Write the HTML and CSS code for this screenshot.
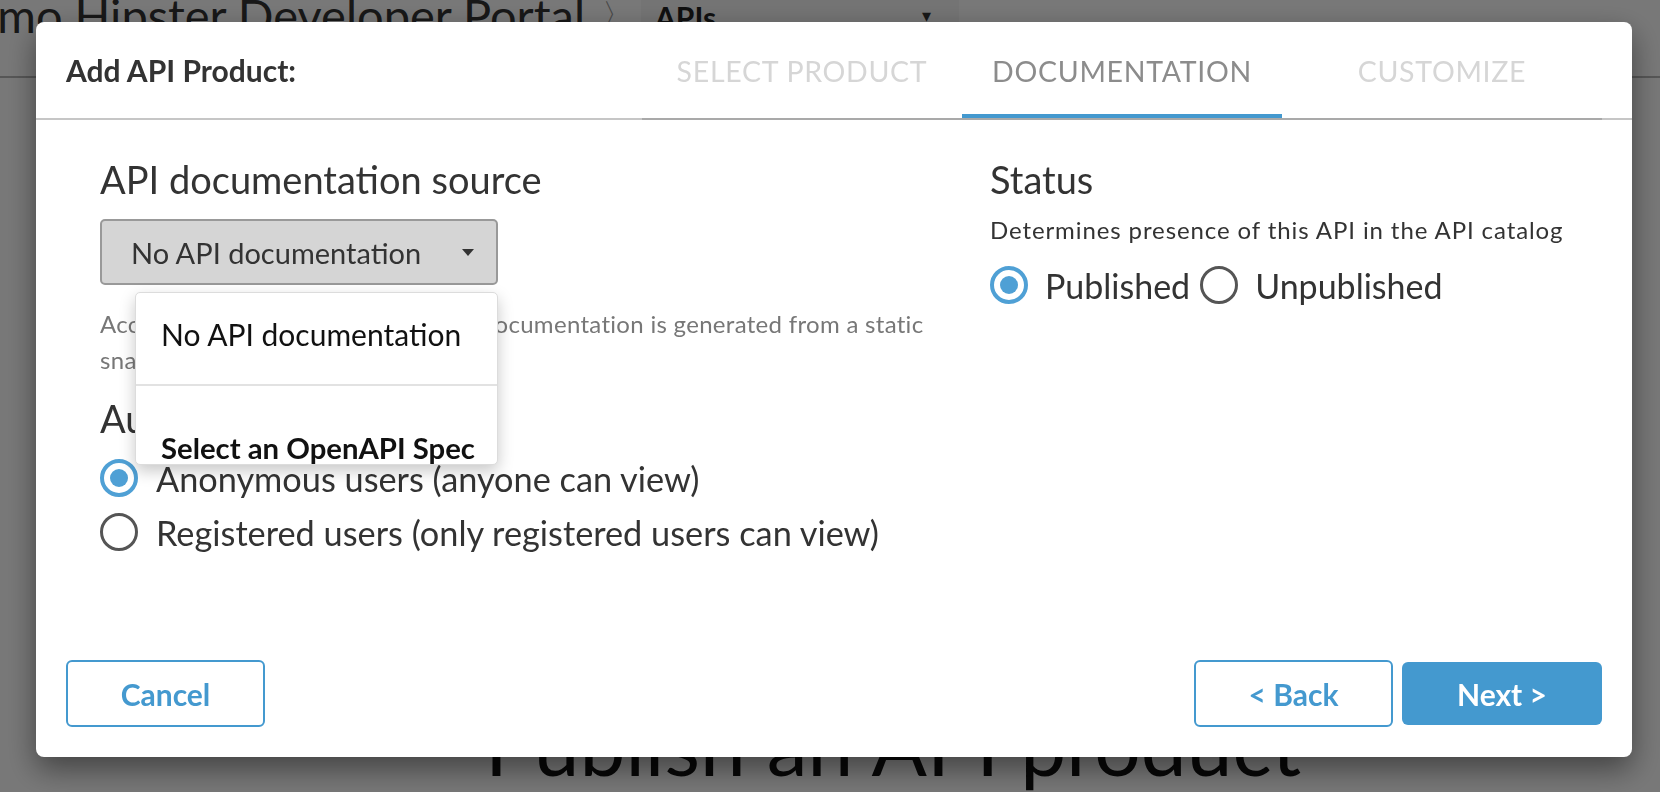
FILE: index.html
```html
<!DOCTYPE html>
<html lang="en">
<head>
<meta charset="utf-8">
<title>Add API Product</title>
<link rel="stylesheet" href="styles.css">
</head>
<body>
<div class="page">
  <header class="site-header">
    <div class="site-title">Demo Hipster Developer Portal</div>
    <div class="crumb-sep">〉</div>
    <div class="crumb-select"><span class="crumb-label">APIs</span><span class="crumb-caret">▾</span></div>
  </header>
  <main class="page-main">
    <h1 class="page-heading">Publish an API product</h1>
  </main>
</div>
<div class="overlay"></div>
<div class="modal">
  <div class="modal-header">
    <div class="modal-title">Add API Product:</div>
    <nav class="steps">
      <div class="step step-done">SELECT PRODUCT</div>
      <div class="step step-active">DOCUMENTATION</div>
      <div class="step step-todo">CUSTOMIZE</div>
    </nav>
  </div>
  <div class="modal-body">
    <section class="col col-left">
      <h2 class="section-title">API documentation source</h2>
      <div class="select-wrap">
        <div class="select-box"><span>No API documentation</span><span class="caret"></span></div>
        <div class="dropdown">
          <div class="dd-item">No API documentation</div>
          <div class="dd-item dd-bold">Select an OpenAPI Spec</div>
        </div>
      </div>
      <p class="helper">Accessible reference docs. The API documentation is generated from a static snapshot of the spec.</p>
      <h2 class="section-title audience">Audience</h2>
      <div class="radio-list">
        <label class="radio-row"><span class="radio radio-on"></span><span>Anonymous users (anyone can view)</span></label>
        <label class="radio-row"><span class="radio"></span><span>Registered users (only registered users can view)</span></label>
      </div>
    </section>
    <section class="col col-right">
      <h2 class="section-title">Status</h2>
      <p class="desc">Determines presence of this API in the API catalog</p>
      <div class="radio-inline">
        <label class="radio-row"><span class="radio radio-on"></span><span>Published</span></label>
        <label class="radio-row"><span class="radio"></span><span>Unpublished</span></label>
      </div>
    </section>
  </div>
  <div class="modal-footer">
    <button class="btn btn-outline">Cancel</button>
    <div class="footer-right">
      <button class="btn btn-outline">&lt; Back</button>
      <button class="btn btn-primary">Next &gt;</button>
    </div>
  </div>
</div>
</body>
</html>
```

FILE: styles.css
```css
* { box-sizing: border-box; }
html, body { margin: 0; padding: 0; }
body {
  width: 1660px;
  height: 792px;
  overflow: hidden;
  font-family: Lato, "Open Sans", "Liberation Sans", sans-serif;
  background: #ffffff;
  color: #333;
}
.page { height: 792px; display: flex; flex-direction: column; }
.site-header {
  height: 78px;
  flex: none;
  border-bottom: 2px solid #b8b8b8;
  display: flex;
  align-items: flex-start;
}
.site-title {
  font-size: 47px;
  line-height: 40px;
  margin-left: -63px;
  margin-top: -5px;
  color: #333;
  white-space: nowrap;
}
.crumb-sep { font-size: 30px; color: #999; margin-left: 17px; margin-top: -2px; line-height: 30px; }
.crumb-select {
  width: 318px;
  height: 76px;
  margin-left: 9px;
  background: #f6f6f6;
  display: flex;
  justify-content: space-between;
  padding: 0 28px 0 14px;
}
.crumb-label { font-weight: 700; font-size: 30px; line-height: 30px; margin-top: 2px; color: #222; }
.crumb-caret { font-size: 18px; color: #333; margin-top: 4px; }
.page-main { flex: 1; display: flex; justify-content: center; padding-left: 126px; }
.page-heading {
  margin: 626px 0 0;
  font-size: 82px;
  line-height: 80px;
  font-weight: 400;
  color: #111;
  white-space: nowrap;
}
.overlay { position: fixed; inset: 0; background: rgba(0,0,0,0.53); }

.modal {
  position: fixed;
  left: 36px;
  top: 22px;
  width: 1596px;
  height: 735px;
  background: #fff;
  border-radius: 8px;
  box-shadow: 0 12px 30px rgba(0,0,0,0.45);
  display: flex;
  flex-direction: column;
}
.modal-header {
  height: 98px;
  border-bottom: 2px solid #c6c6c6;
  display: flex;
  align-items: stretch;
  padding: 0 30px;
}
.modal-title {
  font-size: 30px;
  font-weight: 700;
  color: #333;
  align-self: center;
}
.steps {
  margin-left: auto;
  display: flex;
  margin-bottom: -2px;
  border-bottom: 2px solid #a9a9a9;
}
.step {
  width: 320px;
  display: flex;
  align-items: center;
  justify-content: center;
  padding-top: 5px;
  font-size: 28.5px;
  letter-spacing: 0.7px;
  color: #d6d6d6;
  border-bottom: 4px solid transparent;
}
.step-active { color: #8c8c8c; border-bottom-color: #4499cf; }

.modal-body {
  display: grid;
  grid-template-columns: 890px 1fr;
  padding: 37px 0 0 64px;
}
.section-title {
  margin: 0;
  font-size: 38px;
  line-height: 44px;
  font-weight: 400;
  color: #333;
}
.select-wrap { position: relative; margin-top: 18px; width: 398px; }
.select-box {
  height: 66px;
  background: #d5d5d5;
  border: 2px solid #999;
  border-radius: 5px;
  display: flex;
  align-items: center;
  justify-content: space-between;
  padding: 0 22px 0 29px;
  font-size: 29px;
  color: #333;
}
.caret {
  width: 0; height: 0;
  border-left: 6px solid transparent;
  border-right: 6px solid transparent;
  border-top: 7px solid #333;
}
.dropdown {
  position: absolute;
  left: 35px;
  top: 73px;
  width: 363px;
  background: #fff;
  border: 1px solid #dcdcdc;
  border-radius: 5px;
  box-shadow: 0 6px 16px rgba(0,0,0,0.22);
  z-index: 2;
}
.dd-item {
  height: 91px;
  display: flex;
  align-items: center;
  padding: 0 0 10px 25px;
  font-size: 30px;
  color: #111;
}
.dd-item + .dd-item {
  border-top: 2px solid #e2e2e2;
  height: 80px;
  padding-top: 44px;
  padding-bottom: 0;
  font-size: 29.3px;
}
.dd-bold { font-weight: 700; }
.helper {
  margin: 21px 0 0;
  width: 850px;
  font-size: 24px;
  line-height: 36px;
  letter-spacing: 0.3px;
  color: #777;
}
.audience { margin-top: 18px; }
.radio-list { margin-top: 11px; display: flex; flex-direction: column; }
.radio-row {
  height: 54px;
  display: flex;
  align-items: center;
  gap: 18px;
  font-size: 34.3px;
  color: #333;
}
.radio {
  width: 38px; height: 38px;
  border-radius: 50%;
  border: 3px solid #555;
  flex: none;
  display: flex;
  align-items: center;
  justify-content: center;
  background: #fff;
}
.radio-on { border: 4px solid #4fa0d5; }
.radio-on::after {
  content: "";
  width: 18px; height: 18px;
  border-radius: 50%;
  background: #4fa0d5;
}
.desc {
  margin: 14px 0 0;
  font-size: 24px;
  line-height: 30px;
  letter-spacing: 0.9px;
  color: #333;
}
.radio-inline { margin-top: 13px; display: flex; gap: 10px; }
.radio-inline .radio-row { gap: 17px; font-size: 34px; }

.modal-footer {
  margin-top: auto;
  padding: 0 30px 30px;
  display: flex;
  justify-content: space-between;
  align-items: center;
}
.footer-right { display: flex; gap: 9px; align-items: center; }
.btn {
  width: 199px;
  height: 67px;
  border-radius: 6px;
  font-family: Lato, "Open Sans", "Liberation Sans", sans-serif;
  font-size: 30px;
  font-weight: 700;
  cursor: pointer;
}
.btn-outline { background: #fff; border: 2px solid #4499cf; color: #4499cf; }
.btn-primary { background: #4499cf; border: none; color: #fff; width: 200px; height: 63px; }
```
